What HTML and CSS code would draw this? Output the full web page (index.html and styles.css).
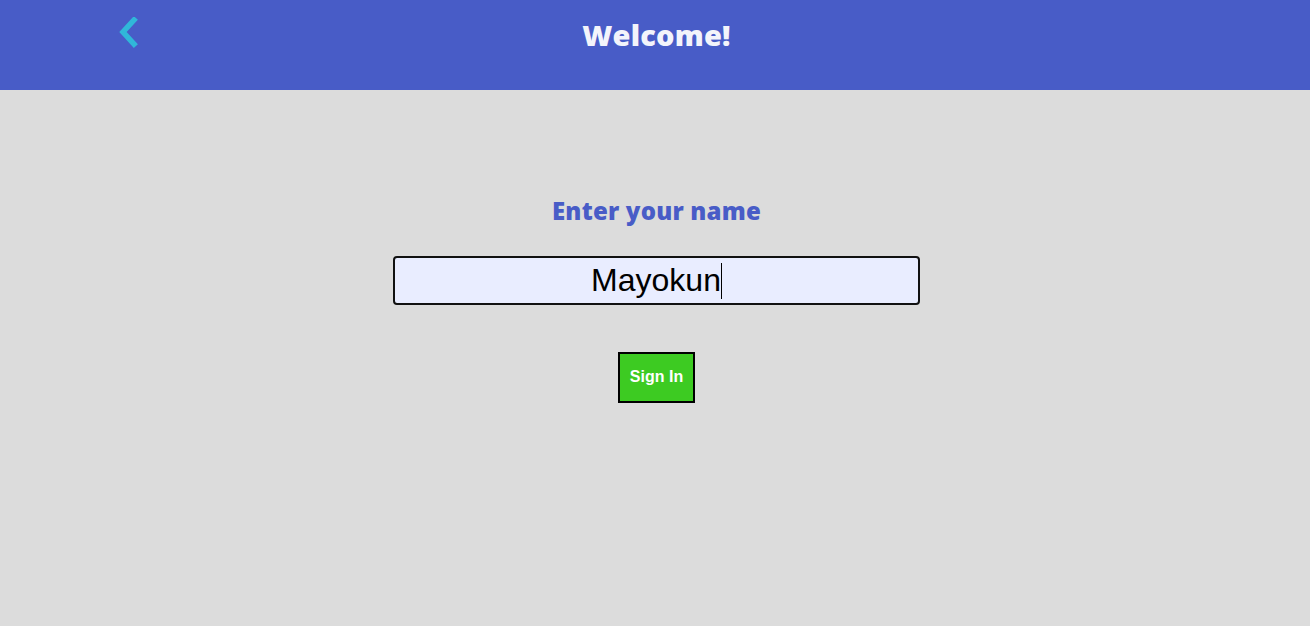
FILE: index.html
```html
<!DOCTYPE html>
<html>
<head>
<meta charset="utf-8">
<link rel="stylesheet" href="styles.css">
</head>
<body>
<header class="topbar">
  <div class="back">
    <svg width="24" height="34" viewBox="0 0 24 34"><polyline points="18,3 7,15 18,27" fill="none" stroke="#30b7d9" stroke-width="5.5" stroke-linecap="square" stroke-linejoin="miter"/></svg>
  </div>
  <h1 class="title">Welcome!</h1>
</header>
<main class="content">
  <h2 class="label">Enter your name</h2>
  <div class="field"><span class="value">Mayokun</span><span class="caret"></span></div>
  <button class="btn">Sign In</button>
</main>
</body>
</html>
```

FILE: styles.css
```css
html, body { margin: 0; padding: 0; }
body { background: #dcdcdc; font-family: "Liberation Sans", Arial, sans-serif; }
.topbar {
  height: 90px;
  background: #485cc7;
  display: flex;
  justify-content: center;
  padding-left: 3px;
  position: relative;
}
.back { position: absolute; left: 116px; top: 17px; }
.back svg { display: block; }
.title {
  margin: 0;
  padding-top: 16px;
  font-family: "Open Sans", sans-serif;
  font-weight: 800;
  font-size: 29px;
  color: #f3f4fb;
  line-height: 38px;
  letter-spacing: 0.2px;
}
.content {
  display: flex;
  flex-direction: column;
  align-items: center;
  padding-top: 106px;
  padding-left: 3px;
}
.label {
  margin: 0;
  font-family: "Open Sans", sans-serif;
  font-weight: 800;
  font-size: 24px;
  color: #485cc7;
  line-height: 30px;
  letter-spacing: 0.2px;
}
.field {
  margin-top: 30px;
  width: 523px;
  height: 45px;
  border: 2px solid #111;
  border-radius: 4px;
  background: #e9edff;
  display: flex;
  align-items: center;
  justify-content: center;
  font-size: 32px;
  color: #000;
}
.caret { width: 1px; height: 36px; background: #000; margin-left: 0; }
.btn {
  margin-top: 47px;
  width: 77px;
  height: 51px;
  border: 2px solid #000;
  background: #3dcb22;
  color: #fff;
  font-family: "Liberation Sans", Arial, sans-serif;
  font-weight: bold;
  font-size: 16px;
  padding: 0 0 2px;
}
```
